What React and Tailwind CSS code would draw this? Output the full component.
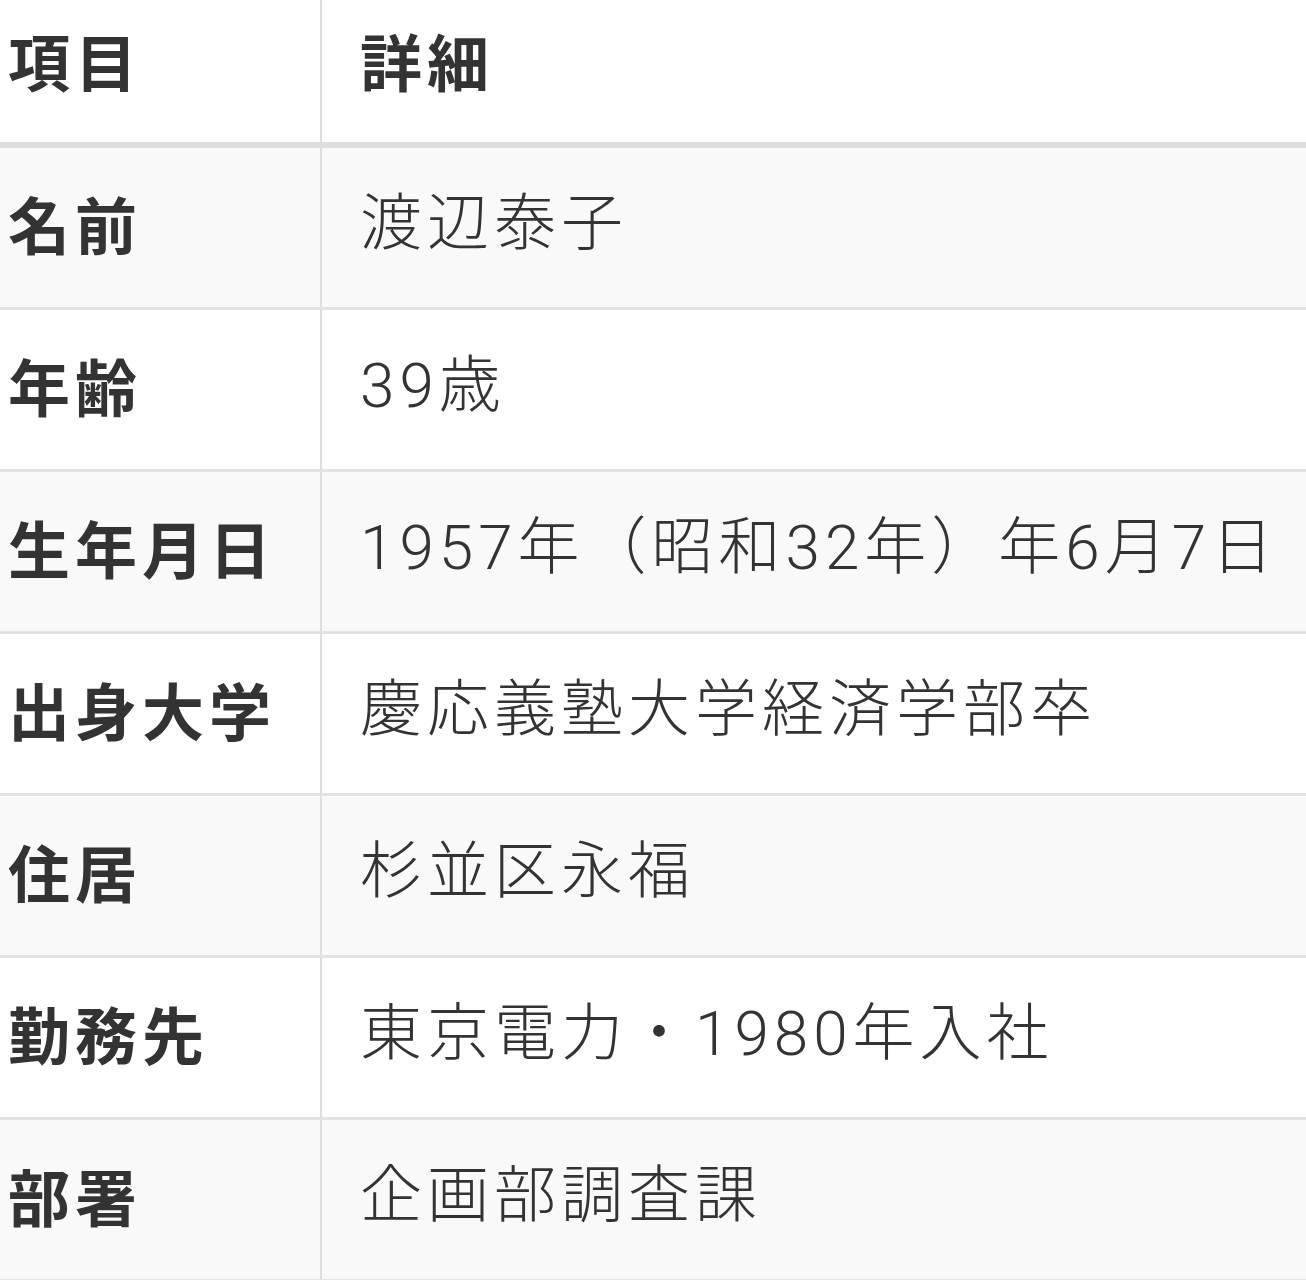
const rows = [
  ["名前", "渡辺泰子"],
  ["年齢", "39歳"],
  ["生年月日", "1957年（昭和32年）年6月7日"],
  ["出身大学", "慶応義塾大学経済学部卒"],
  ["住居", "杉並区永福"],
  ["勤務先", "東京電力・1980年入社"],
  ["部署", "企画部調査課"],
];

export default function App() {
  return (
    <div className="w-[1306px] h-[1280px] overflow-hidden bg-white text-[#333] font-['Noto_Sans_CJK_JP','Noto_Sans',sans-serif]">
      <div className="flex h-[148px] border-b-[6px] border-[#dedede]">
        <div className="w-[322px] shrink-0 border-r-2 border-[#dedede] pl-2 pb-[22px] flex items-center text-[62px] font-bold tracking-[5px]">
          項目
        </div>
        <div className="flex-1 pl-[38px] pb-[22px] flex items-center text-[62px] font-bold tracking-[5px]">
          詳細
        </div>
      </div>
      {rows.map(([label, value], i) => (
        <div
          key={label}
          className={`flex h-[162px] border-b-[3px] border-[#e2e2e2] ${i % 2 === 0 ? "bg-[#f9f9f9]" : "bg-white"}`}
        >
          <div className="w-[322px] shrink-0 border-r-2 border-[#dedede] pl-2 pb-[8px] flex items-center text-[62px] font-bold tracking-[5px]">
            {label}
          </div>
          <div className="flex-1 pl-[38px] pb-[8px] flex items-center text-[62px] font-light tracking-[5px] whitespace-nowrap font-['Roboto','Noto_Sans_CJK_JP',sans-serif]">
            {value}
          </div>
        </div>
      ))}
    </div>
  );
}
